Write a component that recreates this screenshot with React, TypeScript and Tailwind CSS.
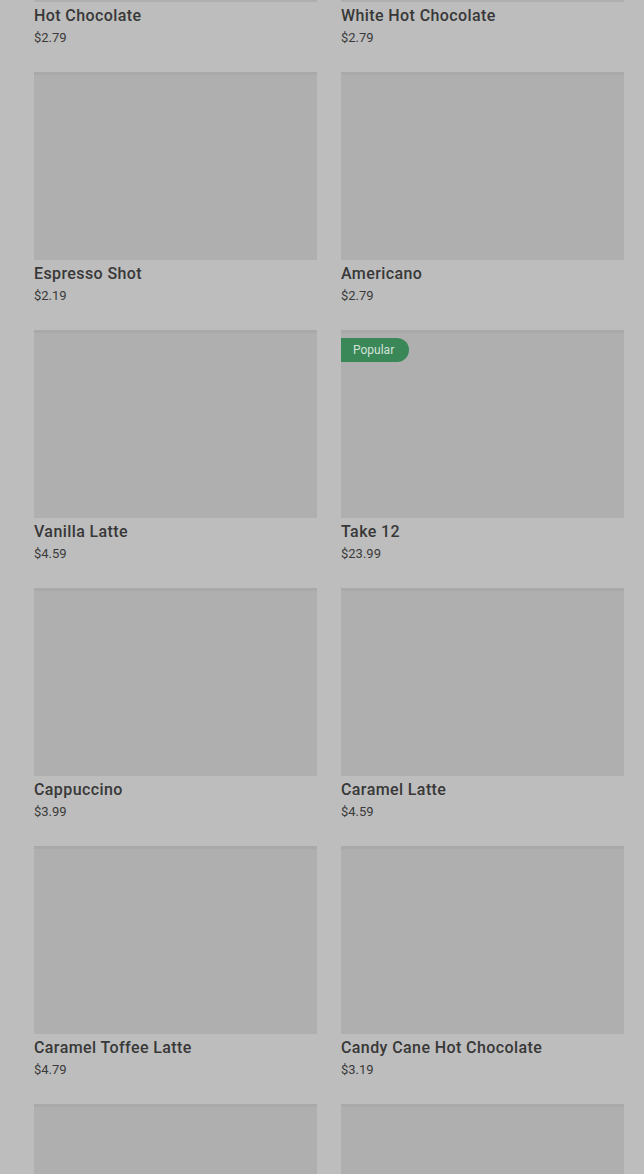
import React from "react";

type Item = { name: string; price: string; popular?: boolean; imageOnly?: boolean };

const items: Item[] = [
  { name: "Hot Chocolate", price: "$2.79" },
  { name: "White Hot Chocolate", price: "$2.79" },
  { name: "Espresso Shot", price: "$2.19" },
  { name: "Americano", price: "$2.79" },
  { name: "Vanilla Latte", price: "$4.59" },
  { name: "Take 12", price: "$23.99", popular: true },
  { name: "Cappuccino", price: "$3.99" },
  { name: "Caramel Latte", price: "$4.59" },
  { name: "Caramel Toffee Latte", price: "$4.79" },
  { name: "Candy Cane Hot Chocolate", price: "$3.19" },
  { name: "", price: "", imageOnly: true },
  { name: "", price: "", imageOnly: true },
];

function Card({ item }: { item: Item }) {
  return (
    <div className="flex flex-col">
      <div className="relative h-[188px] bg-[#afafaf] border-t-[3px] border-[#a9a9a9]">
        {item.popular && (
          <div className="absolute left-0 top-[5px] h-6 pl-3 pr-[15px] flex items-center rounded-r-full bg-[#3a8758] text-[12px] text-[#d3e3d8]">
            Popular
          </div>
        )}
      </div>
      {!item.imageOnly && (
        <div className="pt-[2px] pb-6">
          <div className="text-[16px] leading-6 font-medium tracking-[0.4px] text-[#383838]">{item.name}</div>
          <div className="text-[13px] leading-5 text-[#3a3a3a]">{item.price}</div>
        </div>
      )}
    </div>
  );
}

export default function App() {
  return (
    <div
      className="w-[644px] h-[1174px] overflow-hidden bg-[#bdbdbd]"
      style={{ fontFamily: "Roboto, 'Liberation Sans', sans-serif" }}
    >
      <div className="grid grid-cols-2 gap-x-6 pl-[34px] pr-[20px] -mt-[186px]">
        {items.map((it, i) => (
          <Card key={i} item={it} />
        ))}
      </div>
    </div>
  );
}
